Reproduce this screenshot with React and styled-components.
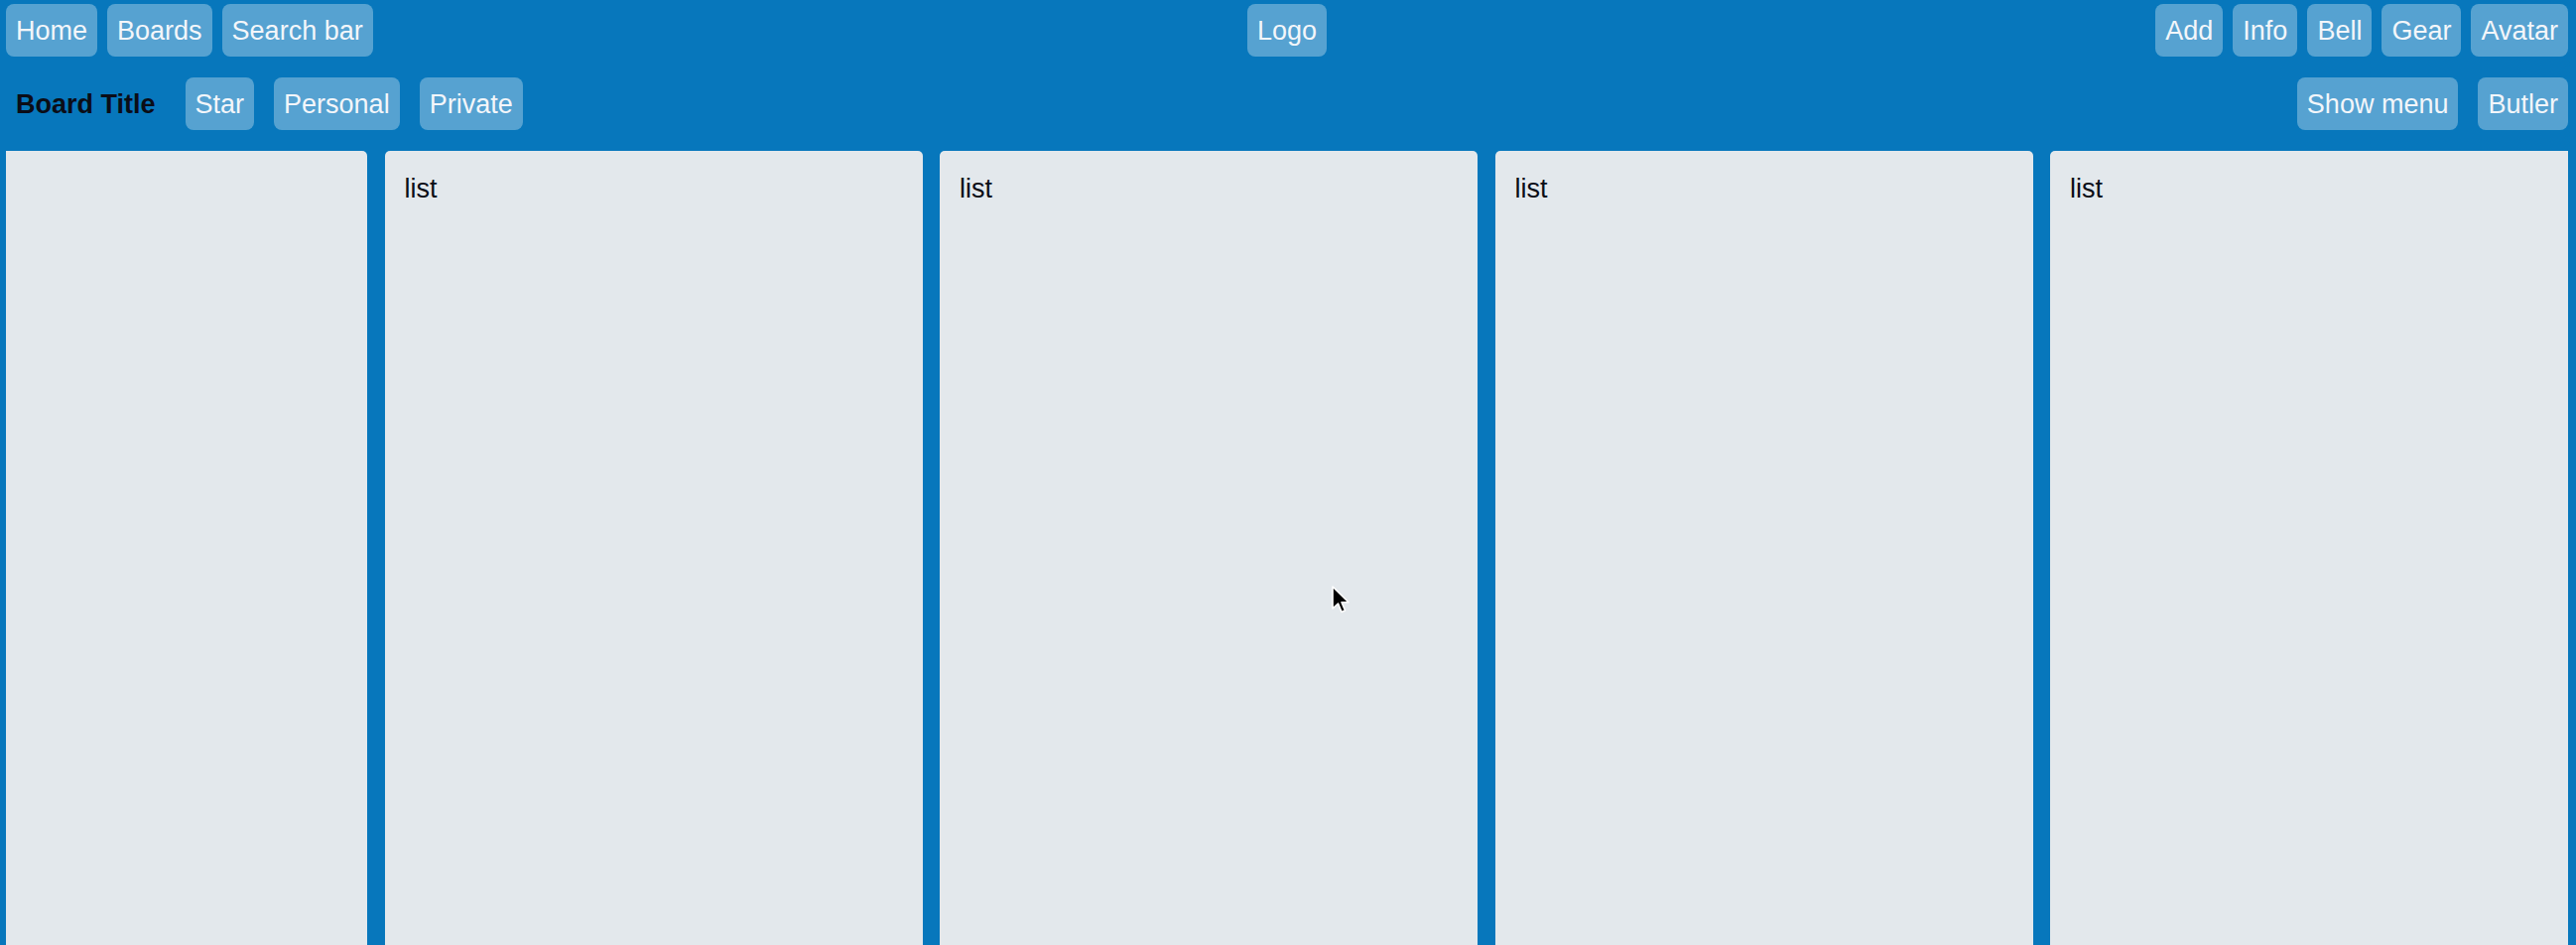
import React, { useLayoutEffect, useRef } from 'react';
import styled, { createGlobalStyle } from 'styled-components';

const GlobalStyle = createGlobalStyle`
  html, body {
    margin: 0;
    padding: 0;
    background: #0777bc;
    font-family: "Liberation Sans", Arial, Helvetica, sans-serif;
  }
`;

const Page = styled.div`
  position: relative;
  height: 100vh;
  overflow: hidden;
  background: #0777bc;
`;

const TopBar = styled.header`
  display: grid;
  grid-template-columns: 1fr auto 1fr;
  align-items: center;
  padding: 4px 8px 0 6px;
`;

const Group = styled.div`
  display: flex;
  align-items: center;
  gap: ${props => props.gap || 10}px;
  justify-content: ${props => props.align || 'flex-start'};
`;

const Button = styled.button`
  box-sizing: border-box;
  height: 53px;
  padding: 2px 10px 0;
  border: none;
  border-radius: 8px;
  background: rgba(255, 255, 255, 0.32);
  color: #f3f6fa;
  font-family: inherit;
  font-size: 27px;
  line-height: 33px;
  white-space: nowrap;
  cursor: pointer;
`;

const BoardTitle = styled.h1`
  box-sizing: border-box;
  margin: 0;
  height: 53px;
  padding: 2px 10px 0;
  display: flex;
  align-items: center;
  font-size: 27px;
  font-weight: bold;
  color: #0b0d17;
  white-space: nowrap;
`;

const BoardBar = styled.div`
  display: flex;
  justify-content: space-between;
  align-items: center;
  margin-top: 21px;
  padding: 0 8px 0 6px;
`;

const Board = styled.div`
  margin-top: 21px;
  padding: 0 8px 0 6px;
`;

const Scroller = styled.div`
  overflow: hidden;
`;

const Track = styled.div`
  display: flex;
  gap: 17.5px;
  width: max-content;
`;

const List = styled.section`
  flex: 0 0 542px;
  height: 900px;
  box-sizing: border-box;
  padding: 23px 20px;
  background: #e3e8ec;
  border-radius: 5px 5px 0 0;
  color: #0b0d17;
  font-size: 27px;
  line-height: 31px;
`;

const Pointer = styled.svg`
  position: absolute;
  left: 1341px;
  top: 589px;
  width: 22px;
  height: 32px;
  pointer-events: none;
`;

// the first list is scrolled mostly out of view, its title hidden
const lists = ['', 'list', 'list', 'list', 'list'];

export default function App() {
  const scrollRef = useRef(null);

  useLayoutEffect(() => {
    if (scrollRef.current) scrollRef.current.scrollLeft = 178;
  }, []);

  return (
    <Page>
      <GlobalStyle />
      <TopBar>
        <Group>
          <Button>Home</Button>
          <Button>Boards</Button>
          <Button>Search bar</Button>
        </Group>
        <Button>Logo</Button>
        <Group align="flex-end">
          <Button>Add</Button>
          <Button>Info</Button>
          <Button>Bell</Button>
          <Button>Gear</Button>
          <Button>Avatar</Button>
        </Group>
      </TopBar>
      <BoardBar>
        <Group gap={20}>
          <BoardTitle>Board Title</BoardTitle>
          <Button>Star</Button>
          <Button>Personal</Button>
          <Button>Private</Button>
        </Group>
        <Group gap={20}>
          <Button>Show menu</Button>
          <Button>Butler</Button>
        </Group>
      </BoardBar>
      <Board>
        <Scroller ref={scrollRef}>
          <Track>
            {lists.map((name, i) => (
              <List key={i}>{name}</List>
            ))}
          </Track>
        </Scroller>
      </Board>
      <Pointer viewBox="0 0 22 32">
        <path d="M2 2 L2 24 L7.5 19 L11 27.5 L14.5 26 L11 17.8 L18 17.8 Z" fill="#000" stroke="#fff" strokeWidth="1.6" strokeLinejoin="round" />
      </Pointer>
    </Page>
  );
}
